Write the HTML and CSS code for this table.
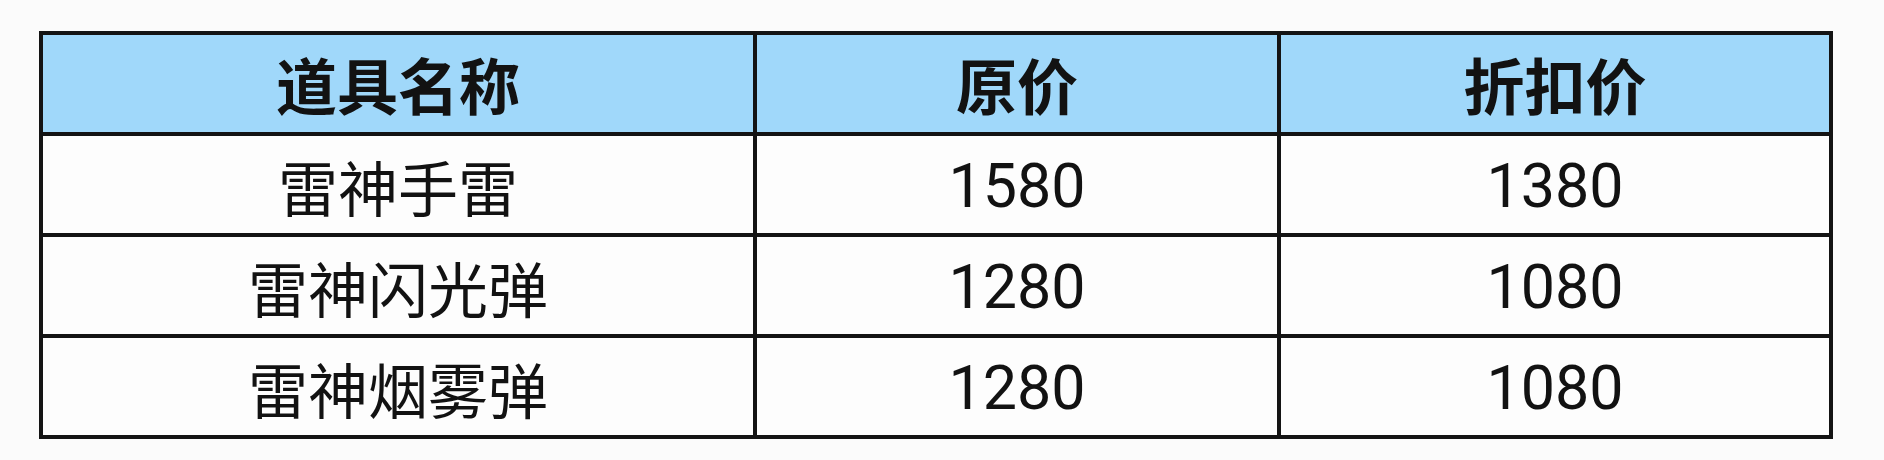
FILE: index.html
```html
<!DOCTYPE html>
<html lang="zh-CN">
<head>
<meta charset="utf-8">
<title>道具价格</title>
<link rel="stylesheet" href="styles.css">
</head>
<body>
<div class="page">
  <table class="price-table">
    <colgroup>
      <col class="c-name">
      <col class="c-orig">
      <col class="c-disc">
    </colgroup>
    <thead>
      <tr>
        <th>道具名称</th>
        <th>原价</th>
        <th>折扣价</th>
      </tr>
    </thead>
    <tbody>
      <tr>
        <td>雷神手雷</td>
        <td class="num">1580</td>
        <td class="num">1380</td>
      </tr>
      <tr>
        <td>雷神闪光弹</td>
        <td class="num">1280</td>
        <td class="num">1080</td>
      </tr>
      <tr>
        <td>雷神烟雾弹</td>
        <td class="num">1280</td>
        <td class="num">1080</td>
      </tr>
    </tbody>
  </table>
</div>
</body>
</html>
```

FILE: styles.css
```css
html, body {
  margin: 0;
  padding: 0;
  background: #fbfbfb;
}

.page {
  padding: 31px 0 0 39px;
}

.price-table {
  border-collapse: collapse;
  table-layout: fixed;
  width: 1790px;
  font-family: "Noto Sans CJK SC", "Noto Sans", sans-serif;
  color: #121212;
}

.c-name { width: 714px; }
.c-orig { width: 524px; }
.c-disc { width: 552px; }

.price-table th,
.price-table td {
  border: 4px solid #141414;
  text-align: center;
  padding: 0;
  line-height: 1;
}

.price-table th {
  height: 97px;
  background: #a0d8fa;
  font-size: 61px;
  font-weight: 700;
}

.price-table td {
  height: 91px;
  background: #fdfdfd;
  font-size: 60px;
  font-weight: 400;
  padding: 4px 0 2px;
}

.price-table td.num {
  font-family: Roboto, "Noto Sans", sans-serif;
  font-size: 61px;
  padding: 5px 0 1px;
}
```
